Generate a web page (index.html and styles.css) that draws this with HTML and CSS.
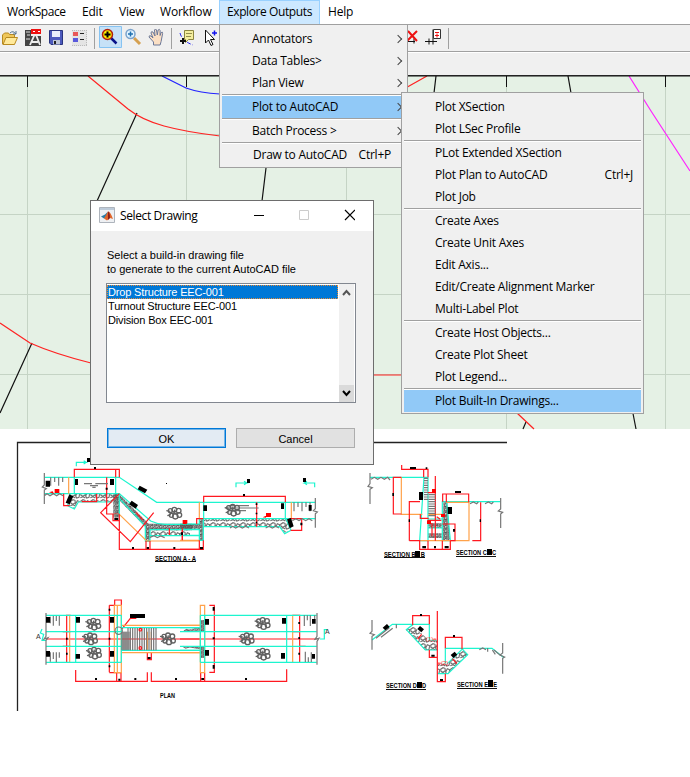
FILE: index.html
```
<!DOCTYPE html>
<html lang="en">
<head>
<meta charset="utf-8">
<title>WorkSpace</title>
<link rel="stylesheet" href="styles.css">
</head>
<body>
<nav class="menubar">
  <span>WorkSpace</span><span>Edit</span><span>View</span><span>Workflow</span><span class="open">Explore Outputs</span><span>Help</span>
</nav>
<div class="toolbar">
<svg width="690" height="27" viewBox="0 24 690 27">
  <!-- folder -->
  <path d="M2.500 43V34l2-2h4l1 1.500h5v9.500z" fill="#efc75b" stroke="#b88a20"/><path d="M3 43.500l3-7h11.500l-3 7z" fill="#ffe99b" stroke="#b88a20"/><path d="M10 32q3-3 6 1m0-3v3h-3" fill="none" stroke="#55728e"/>
  <!-- AutoCAD -->
  <path d="M25 29h6v16h-6zM31 35h10v10H31z" fill="#444"/><path d="M26 31h4m-3 3h3m-4 4h4" stroke="#ddd"/><path d="M30 44l4.500-10h1.500l4 10m-8-3h6" fill="none" stroke="#eee" stroke-width="1.800"/><path d="M31 28h10v5H31z" fill="#e11"/><path d="M33 30.500h2m3 0h2" stroke="#fff"/>
  <!-- disk -->
  <path d="M49.500 29.500h13v14H51l-1.500-1.500z" fill="#4c59bd" stroke="#29347f"/><path d="M52 30h8v6h-8z" fill="#e8edfb"/><path d="M53 39h7v4.500h-7z" fill="#bfc6d8"/><path d="M54 40h2v3h-2z" fill="#222"/>
  <!-- legend -->
  <path d="M72 29h15v16H72z" fill="#e4e4e4"/><path d="M73 31h5v4h-5z" fill="#e85858"/><path d="M73 37h5v4h-5z" fill="#5959dc"/><path d="M80 32.500h4m-4 6h4" stroke="#222"/><path d="M72 29.500h15M72 44.500h15M86.500 29v15" stroke="#bbb" stroke-dasharray="1 1"/>
  <path d="M94.500 27v21M171.500 27v21M448.500 27v21" stroke="#a0a0a0"/>
  <path d="M99.500 25.500h22v21h-22z" fill="#c6e1f7" stroke="#86c3f2"/>
  <path d="M111 37l5.500 5.500" stroke="#0a128a" stroke-width="2.500"/><circle cx="107.500" cy="33.500" r="5" fill="#ffef00" stroke="#b02010" stroke-width="1.500"/><path d="M104.500 33.500h6m-3-3v6" stroke="#000" stroke-width="2"/>
  <path d="M134 37l6 6" stroke="#d5a050" stroke-width="3"/><circle cx="130.500" cy="33" r="4.500" fill="#dff2ff" stroke="#7aa2cb" stroke-width="1.500"/><path d="M128 33h5m-2.500-2.500v5" stroke="#2070b0" stroke-width="1.500"/>
  <path d="M153.500 44v-3l-4.500-5q0-2 2-1l2 2-2-5q0-2 2-1l2 4-.5-6q1-2 2 0l.8 5 .8-5q1.500-1.500 2 .5v5l1-3q2-1 1.500 1l-1.500 8-1 3.500z" fill="#fbdfc4" stroke="#6c7898"/>
  <path d="M180 32q2 8 13 12" fill="none" stroke="#2222ee" stroke-dasharray="4 2"/><path d="M184.500 29.500h9v9h-5l-3 3v-3h-1z" fill="#f4ee9e" stroke="#8c8640"/><path d="M186 32.500h6m-6 3h5" stroke="#938d50"/><path d="M180 40h6m-3-3v6" stroke="#111" stroke-width="2"/>
  <path d="M205.500 29v13l3-3 2.500 5.500 2-1-2.500-5h4z" fill="#fff" stroke="#111"/><path d="M212 32h5m-2.500-2.500v5" stroke="#11e" stroke-width="1.500"/>
  <path d="M402 40.500h13m-10-10v13m9-6v5" stroke="#111"/><path d="M408 30l9 10m0-10l-10 10" stroke="#e11" stroke-width="2"/>
  <path d="M425 40.500h12m-8-3v6m4-15v15" stroke="#111"/><path d="M433.500 28.500h7v9h-7z" fill="#fff" stroke="#333"/><path d="M435 31.500h4m-4 3h4m-2-2v4" stroke="#e11"/>
</svg>
</div>
<div class="strip"></div>
<svg class="map" width="690" height="354" viewBox="0 76 690 354">
  <path fill="#e5f1e5" d="M0 76h690v353H0z"/>
  <path d="M27.500 76v353M186.500 76v353M346.500 76v353M506.500 76v353M665.500 76v353M0 134.500h690M0 214.500h690M0 294.500h690M0 374.500h690" stroke="#c5d4c5" fill="none"/>
  <path d="M27.500 76v11M186.500 76v11M346.500 76v11M506.500 76v11M665.500 76v11" stroke="#111"/>
  <g fill="none" stroke-width="1.200">
    <path d="M137 113L97 201M266 168l-4 33M32 343L0 413M436 76l-2 17M568 76l3 17L636 429M526 422l-3 7" stroke="#111"/>
    <path d="M88 76l40 33q14 11 36 17t56 10M0 323l30 20q25 11 61 20M402 90l25-14M373 375h29M517 413l17 16" stroke="#f22"/>
    <path d="M162 76l24 12q14 5 34 6" stroke="#22f"/><path d="M629 76l22 35 39 60" stroke="#f2f"/>
  </g>
  <path d="M0 75.500h690" stroke="#111" stroke-width="2"/>
</svg>
<svg class="cad" width="690" height="347" viewBox="0 430 690 347">
  <defs>
    <pattern id="stone" width="30" height="24" patternUnits="userSpaceOnUse"><path d="M2 7l7-5 6 2 1 7-7 5-6-3zM17 15l5-10 7 3-2 11-7 2zM1 20l8-3 7 4" fill="none" stroke="#707070" stroke-width="3.400"/></pattern>
    <pattern id="rubble" width="13" height="13" patternUnits="userSpaceOnUse"><path d="M1 3l5-2 2 5-5 3zM8 8l4-3v6l-4 2zM1 11l5 2M10 1l2 1" fill="none" stroke="#555" stroke-width="2.800"/></pattern>
    <g id="clump" fill="none" stroke="#606060" stroke-width="4"><circle cx="-12" cy="-8" r="6"/><circle cx="0" cy="-11" r="7"/><circle cx="13" cy="-8" r="7"/><circle cx="15" cy="5" r="7"/><circle cx="3" cy="9" r="8"/><circle cx="-9" cy="6" r="6"/><path d="M-24-8l12 2m-9 13l11-3m11-15l-2 12m-10-2l20 4"/></g>
  </defs>
  <path d="M17.500 711V442.500H507" fill="none" stroke="#222" stroke-width="1.300"/>
  <!-- Section A-A, left half -->
  <g class="draw" transform="translate(10 435) scale(.33333)">
    <path class="rock" d="M190 175h135v25H205l-10 20-22-10z"/><path class="rub" d="M310 178h18l88 88h130v20H420v34h-14v-44l-78-80v52h-18z"/><path class="rock" d="M422 286h118v14H422z"/>
    <path class="cy" d="M103 127h225l112 75h130M103 176h225l94 82q25 12 50 10h100M193 127v49m124-49v49m-10 25H205l-12 21-20-10 8-34M328 176v62h-18M328 190l78 84v44h14v-34h150M420 302h150M199 94V82h30l-8-5m8 5l-8 5"/>
    <path class="or" d="M176 127v49M328 238l82 80h160"/>
    <path class="rd" d="M193 127v-24h135v24M317 103v24M290 127v110h38M309 238v19h19M328 176l-56 57 89 87 70-87M328 238v105h242M408 318v25m12-25v25M161 176v36h18M260 176v24h-45M378 232l20 22M478 280v20m39-20v36"/>
    <path class="gy" d="M103 114v36l-6 6 12 5-6 4v42M122 127v25m12-25v14m12-14v25m12-25v14M222 146h24m10 0h38m-54 6h24m-17 5h10M103 182l8-6 9 6 10-6 10 6 9-6 10 6M420 307l12-5 10 6 10-5 12 5"/>
    <use href="#clump" x="493" y="235"/>
    <path class="bk" d="M107 137h13v18h-13zM195 132h9v18h-9zM300 132h12v18h-12zM389 152l23 12-7 11-22-12zM365 197l19 13-7 11-20-13zM178 178l12 6-11 24-12-5zM231 69h11v12h-11zM252 96h6v6h-6zM287 158h6v6h-6zM313 249h12v6h-12zM366 336h6v6h-6zM410 336h7v6h-7zM490 336h6v6h-6zM468 144h3v3h-3z"/>
    <path class="rf" d="M134 162h14v12h-14zM520 255h12v12h-12zM117 172l11-3 4 7z"/>
  </g>
  <!-- Section A-A, right half -->
  <g class="draw" transform="translate(180 450) scale(.33333)">
    <path class="rock" d="M71 207h247l14 32-18 10-15-20H71z"/><path class="rub" d="M0 222h58v-15h12v64H58v-34H0z"/>
    <path class="cy" d="M0 157h407M71 206h336M71 157v49M316 157v49M71 230h228l15 21 19-10-15-34M0 238h58v33h12v-65H58v16H0M0 256h58M168 112V99h32l-8-5m8 5l-8 5M404 112V99h-31l8-5m-8 5l8 5"/>
    <path class="or" d="M58 157v49M334 157v49M0 271h58"/>
    <path class="rd" d="M71 157v-18h245v18M230 157v73M50 222v-16h20M0 298h70v-27M58 271v27M7 235v36M328 206h37v35h-33"/>
    <path class="gy" d="M342 157v27m12-27v14m12-14v27m12-27v14m12-14v27M406 144v32l-6 6 12 4-6 5v42M337 212l10-6 10 6 10-6 10 6 10-6 10 6M150 234l8-5 9 5 10-5 10 5 10-5 10 5m50 0l10-5 10 5 10-5 10 5M136 174h100m-93-7h64m-35 15h26"/>
    <use href="#clump" x="158" y="181"/>
    <path class="bk" d="M70 166h11v17H70zM303 160h9v17h-9zM386 165h9v17h-9zM201 87h9v12h-9zM369 84h9v12h-9zM189 132h6v6h-6zM227 160h5v5h-5zM227 188h5v5h-5zM227 215h5v5h-5zM321 208l12-4 8 25-12 6zM361 218h6v8h-6zM60 291h9v7h-9zM3 247h6v8H3z"/>
    <path class="rf" d="M258 189h15v12h-15zM248 202l10-5v6zM8 210h12v12H8z"/>
  </g>
  <!-- Sections B-B and C-C -->
  <g class="draw" transform="translate(360 435) scale(.33333)">
    <path class="rub" d="M250 202h12l8 115h-22zM205 265h40v14h-40zM205 295h40v14h-40z"/>
    <path class="cy" d="M30 127h174v190h-25l13-190M247 317V200h13l11 117zM247 200h175M205 252h42M205 279h42"/>
    <path class="or" d="M124 127v111h63m18 0h42M259 202h68v115h-57M181 317h90"/>
    <path class="rd" d="M125 90v13h79v24M191 103v24M124 127h-24v110h24M148 317V200h32M148 317h31v26h92v-26M204 317v26m43-26v26M226 123v194M204 173h23M248 200v-23h78v25M259 177v25M181 238v12h25M247 267h38v50h-14M337 317h25V202M204 256h40m-28 8v40M230 245l10 7"/>
    <path class="gy" d="M30 114v32l-6 8 13 4-7 5v44M422 189v33l-7 6 13 4-6 5v42M192 130h12m-12 7h12m-12 7h12m-12 7h12m-12 7h12m-12 7h12m-12 7h12m-12 7h12m-12 7h12m-12 7h12M205 179h22m-22 7h22m-22 7h22m-22 7h22m-22 7h22m-22 7h22m-22 7h22m-22 7h22m-22 7h22m-22 7h22M33 133l10-6 10 6 10-6 10 6 10-6 7 8M330 206l10-5 10 5 5-5m20 5l10-5 10 5 5-5"/>
    <path class="bk" d="M150 96h18v6h-18zM177 171h12v24h-12zM97 174h5v9h-5zM146 253h4v8h-4zM285 168h18v6h-18zM263 216h13v21h-13zM279 282h6v8h-6zM359 253h4v8h-4zM187 333h11v7h-11zM222 333h6v7h-6zM254 333h12v7h-12zM197 97h5v5h-5z"/>
    <path class="rf" d="M216 162h12v12h-12zM243 237h12v9h-12zM201 256h12v11h-12z"/>
  </g>
  <!-- Plan, left half -->
  <g class="draw" transform="translate(10 585) scale(.33333)">
    <path d="M333 140h30v56h-30z" class="steps"/>
    <path class="rd" d="M108 162h462M170 91v141M182 91h-14M158 140h24M158 184h24M298 61v201M298 61h16v-16h20v16M298 263h37M197 255v34h215v-27M320 263v26M333 263v26M424 262v27h146M412 202v22h12v-22M334 134l27-34h18"/>
    <path class="or" d="M179 91v141M313 61h21v202h-21zM322 61v202M334 121h236M334 203h236M412 140v56m12-56v56"/>
    <path class="cy" d="M108 91h226M108 232h226M108 140h226M108 184h226M197 91v141M322 91v141M334 91v141M334 128h236M334 196h236M96 132l-5 12 10 4-5 18h12"/><circle class="gy" cx="326" cy="137" r="11"/>
    <path class="gy" d="M108 84v70l-6 8 12-4-6 8v73M121 95v20m9-22v29m9-29v15m9-15v29M121 202v28m9-28v20m9-20v30m9-30v16M336 140v56m6-56v56m6-56v56m6-67v67m7-67v67m7-67v67m7-67v67m7-67v67m7-67v67m7-67v67m7-67v67m7-67v67m7-67v67m7-67v67m7-67v67m7-67v67M522 138l8-5 9 5M518 184l9 5 11-3"/>
    <use href="#clump" x="250" y="118"/><use href="#clump" x="240" y="162"/><use href="#clump" x="252" y="205"/><use href="#clump" x="474" y="162"/>
    <path class="bk" d="M108 96h12v17h-12zM108 198h12v17h-12zM198 96h12v17h-12zM197 207h13v14h-13zM300 96h12v17h-12zM300 198h12v17h-12zM360 87h45v12h-45zM255 279h6v6h-6zM373 279h6v6h-6zM495 279h6v6h-6zM325 281h6v6h-6zM413 216h9v6h-9zM168 158h5v6h-5zM168 203h5v6h-5zM296 71h5v6h-5zM296 158h5v6h-5zM296 241h5v6h-5z"/>
    <circle class="rd" cx="391" cy="134" r="4"/><circle class="rd" cx="391" cy="189" r="4"/>
  </g>
  <!-- Plan, right half -->
  <g class="draw" transform="translate(180 585) scale(.33333)">
    <path class="rub" d="M10 137l55-12v12zM5 184h60v34l-5-25zM63 105h12v35H63zM63 184h12v35H63z"/>
    <path class="rd" d="M0 162h410M88 61h15v201H88M0 289h320v-36M62 263v26M74 263v26M337 91h22v141M337 140h22M359 184h18"/>
    <path class="or" d="M61 61h13v202H61zM338 91v141M0 121h61M0 203h61"/>
    <path class="cy" d="M61 91h349M61 232h349M0 140h410M0 184h410M61 91v141M74 91v141M320 91v141M0 128h61M0 196h61M420 162h13v-28h8"/>
    <path class="gy" d="M373 91v32m9-32v15m9-15v32m13-32v12M376 200v31m9-14v14m9-29v29M411 84v70l-6 9 12-3-6 9v70"/>
    <use href="#clump" x="248" y="116"/><use href="#clump" x="200" y="162"/><use href="#clump" x="248" y="208"/>
    <path class="bk" d="M75 102h12v17H75zM75 195h12v17H75zM306 99h12v17h-12zM303 204h12v17h-12zM396 102h11v14h-11zM396 207h9v14h-9zM98 66h6v11h-6zM98 157h6v6h-6zM98 240h6v11h-6zM195 279h6v6h-6zM64 279h8v6h-8zM355 111h5v6h-5zM355 156h5v6h-5zM355 203h5v6h-5z"/>
  </g>
  <!-- Sections D-D and E-E -->
  <g class="draw" transform="translate(360 595) scale(.33333)">
    <path class="rock" d="M157 90l50 46h26v29h-38l-57-60zM233 206h30l45-43 15 15-59 58h-31z"/>
    <path class="cy" d="M36 135l61-47h111v48h25M157 90l-18 14 57 61h36M256 206v-46h140l36 28M232 236h32l59-57-16-17-45 44"/>
    <path class="rd" d="M158 90V62h50v26M208 164v23h24M232 48v212h24v-24M256 160v-33h50v35M173 132l12-14M277 191l14 15"/>
    <path class="gy" d="M36 75v34l-6 6 13 4-7 5v40M428 144v30l-8 6 14 6-6 4v46M48 130l40-32m-25 29l35-27M109 88v12M358 164l10-5 10 5m5-5v11M397 165l9 13m-4-13l20 17"/>
    <path class="bk" d="M68 98l13-11 8 9-13 10zM180 93l12 10-8 9-12-10zM272 180l12-10 8 9-12 10zM180 57h6v6h-6zM279 120h6v6h-6zM214 179h10v6h-10zM240 252h9v6h-9z"/>
    <g class="redtext"><text x="198" y="137">(1)e</text><text x="233" y="211">e(2)</text></g>
  </g>
  <g class="caption">
    <text x="155" y="560.500" textLength="41" lengthAdjust="spacingAndGlyphs">SECTION A - A</text><text x="384" y="556.500" textLength="41" lengthAdjust="spacingAndGlyphs">SECTION B - B</text><text x="456" y="555" textLength="40" lengthAdjust="spacingAndGlyphs">SECTION C - C</text><text x="160" y="698" textLength="15" lengthAdjust="spacingAndGlyphs">PLAN</text><text x="386" y="688" textLength="40" lengthAdjust="spacingAndGlyphs">SECTION D - D</text><text x="457" y="687" textLength="40" lengthAdjust="spacingAndGlyphs">SECTION E - E</text>
  </g>
  <g class="letter"><text x="36" y="638.500">A</text><text x="325" y="634">A</text></g>
  <path d="M155 561.500h41M384 557.500h41M456 556.500h40M386 689.500h40M457 688.500h40" stroke="#111"/>
  <path d="M415 551h5v6h-5zM487 549h5v6h-5zM417 682h5v6h-5zM488 680h5v7h-5z"/>
</svg>

<section class="menu outputs">
  <div class="item sub">Annotators</div><div class="item sub">Data Tables&gt;</div><div class="item sub">Plan View</div><hr>
  <div class="item sub hot">Plot to AutoCAD</div><hr><div class="item sub">Batch Process &gt;</div><hr>
  <div class="item draw-item"><span>Draw to AutoCAD</span><span>Ctrl+P</span></div>
</section>
<section class="menu plot">
  <div class="item">Plot XSection</div><div class="item">Plot LSec Profile</div><hr>
  <div class="item">PLot Extended XSection</div><div class="item"><span>Plot Plan to AutoCAD</span><span>Ctrl+J</span></div><div class="item">Plot Job</div><hr>
  <div class="item">Create Axes</div><div class="item">Create Unit Axes</div><div class="item">Edit Axis...</div><div class="item">Edit/Create Alignment Marker</div><div class="item">Multi-Label Plot</div><hr>
  <div class="item">Create Host Objects...</div><div class="item">Create Plot Sheet</div><div class="item">Plot Legend...</div><hr>
  <div class="item hot">Plot Built-In Drawings...</div>
</section>

<section class="dialog">
  <header>
    <svg width="16" height="16" viewBox="0 0 16 16"><path d="M.5.5h15v15H.5z" fill="#eef0f3" stroke="#aeb4bc"/><path d="M1 2h14" stroke="#8da6c0"/><path d="M2 9.500l4-2 3-3-2 6-2 1z" fill="#287ca7"/><path d="M5 11.500l4-7q2-1 5 7.500l-3-1-3 2.500z" fill="#e0662c"/><path d="M9 4.500q2 1 2 6.500l-2 2z" fill="#8b201b"/></svg>
    <span class="title">Select Drawing</span>
    <svg class="controls" width="101" height="12" viewBox="0 0 101 12" fill="none"><path d="M0 6.500h10" stroke="#000"/><path d="M45.500 1.500h9v9h-9z" stroke="#ccc"/><path d="M91 1l10 10m0-10L91 11" stroke="#000" stroke-width="1.200"/></svg>
  </header>
  <p>Select a build-in drawing file<br>to generate to the current AutoCAD file</p>
  <div class="list">
    <div class="rows"><div class="selected">Drop Structure EEC-001</div><div>Turnout Structure EEC-001</div><div>Division Box EEC-001</div></div>
    <div class="scroll"><svg width="15" height="17"><path d="M4 11l3.500-4 3.500 4" fill="none" stroke="#555" stroke-width="2"/></svg><svg class="down" width="15" height="17"><path d="M4 6l3.500 4L11 6" fill="none" stroke="#000" stroke-width="2"/></svg></div>
  </div>
  <div class="buttons"><button class="ok">OK</button><button>Cancel</button></div>
</section>
</body>
</html>
```
FILE: styles.css
```
* { box-sizing: border-box; }
body { margin: 0; width: 690px; height: 777px; position: relative; overflow: hidden; background: #fff; font: 12px "Open Sans", "Noto Sans", sans-serif; color: #000; }
svg { display: block; }
.menubar { display: flex; height: 24px; line-height: 24px; letter-spacing: -.2px; }
.menubar span { padding-left: 7px; white-space: nowrap; }
.menubar span:nth-child(1) { width: 75px; letter-spacing: -.45px; }
.menubar span:nth-child(2) { width: 37px; }
.menubar span:nth-child(3) { width: 41px; }
.menubar span:nth-child(4) { width: 66px; }
.menubar .open { width: 101px; background: #cce8ff; border: 1px solid #99d1ff; border-bottom: 0; line-height: 22px; letter-spacing: -.4px; }
.menubar span:last-child { padding-left: 8px; }
.toolbar { height: 28px; background: #f0f0f0; border-top: 1px solid #a0a0a0; border-bottom: 1px solid #a0a0a0; }
.strip { height: 24px; background: #f0f0f0; border-top: 1px solid #fff; border-bottom: 1px solid #222; }
.map { height: 354px; }
.menu { position: absolute; background: #f0f0f0; border: 1px solid #a0a0a0; letter-spacing: -.24px; }
.menu .item { height: 22px; line-height: 22px; display: flex; justify-content: space-between; white-space: nowrap; }
.menu hr { height: 2px; margin: 0; border: 0; border-top: 1px solid #a0a0a0; border-bottom: 1px solid #fff; }
.menu .hot { background: #91c9f7; }
.outputs { left: 219px; top: 24px; width: 189px; height: 144px; padding: 3px 2px; }
.outputs .item { padding-left: 30px; }
.outputs .draw-item { padding: 0 14px 0 31px; }
.sub::after { content: ""; width: 5px; height: 5px; border: solid #444; border-width: 1px 1px 0 0; transform: rotate(45deg); margin: 8px 4px 0 0; }
.plot { left: 401px; top: 92px; width: 243px; height: 322px; padding: 3px 2px; }
.plot .item { padding: 0 8px 0 31px; }
.dialog { position: absolute; left: 90px; top: 200px; width: 284px; height: 265px; border: 1px solid #6d6d6d; background: #f0f0f0; font: 11px "Liberation Sans", sans-serif; }
.dialog header { height: 30px; background: #fff; display: flex; align-items: center; padding: 0 0 2px 8px; }
.title { font: 12px "Open Sans", sans-serif; width: 139px; padding-left: 5px; letter-spacing: -.38px; }
.dialog p { margin: 17px 0 0 16px; line-height: 14px; }
.list { margin: 7px 0 0 15px; width: 250px; height: 120px; border: 1px solid #828790; background: #fff; display: flex; line-height: 15px; letter-spacing: -.16px; }
.rows { width: 232px; padding-top: 1px; }
.rows div { height: 14px; padding-left: 1px; width: 231px; }
.rows .selected { background: #0078d7; color: #fff; outline: 1px dotted #e78b38; outline-offset: -1px; }
.scroll { width: 15px; background: #f0f0f0; display: flex; flex-direction: column; justify-content: space-between; }
.down { background: #dadada; }
.buttons { display: flex; gap: 10px; margin: 25px 0 0 16px; }
button { width: 119px; height: 20px; padding: 2px 0 0; border: 1px solid #adadad; background: #e1e1e1; font: inherit; color: #000; }
.ok { border: 1px solid #0078d7; box-shadow: inset 0 0 0 1px #72b4e8; background: #e3ebf3; }
.draw path, .draw circle { fill: none; stroke-width: 3.6; }
.draw .cy { stroke: #1cf5cf; }
.draw .rd { stroke: #ff1820; }
.draw .or { stroke: #ffa24a; }
.draw .gy { stroke: #777; }
.draw .bk { fill: #000; }
.draw .rf { fill: #f00; }
.draw .rock { fill: url(#stone); }
.draw .rub { fill: url(#rubble); }
.draw .steps { fill: #aaa; }
.redtext { font: 18px "Liberation Sans", sans-serif; fill: #f22; }
.caption { font: bold 6.5px "Liberation Sans", sans-serif; }
.letter { font: 7px "Liberation Sans", sans-serif; fill: #333; }
```
